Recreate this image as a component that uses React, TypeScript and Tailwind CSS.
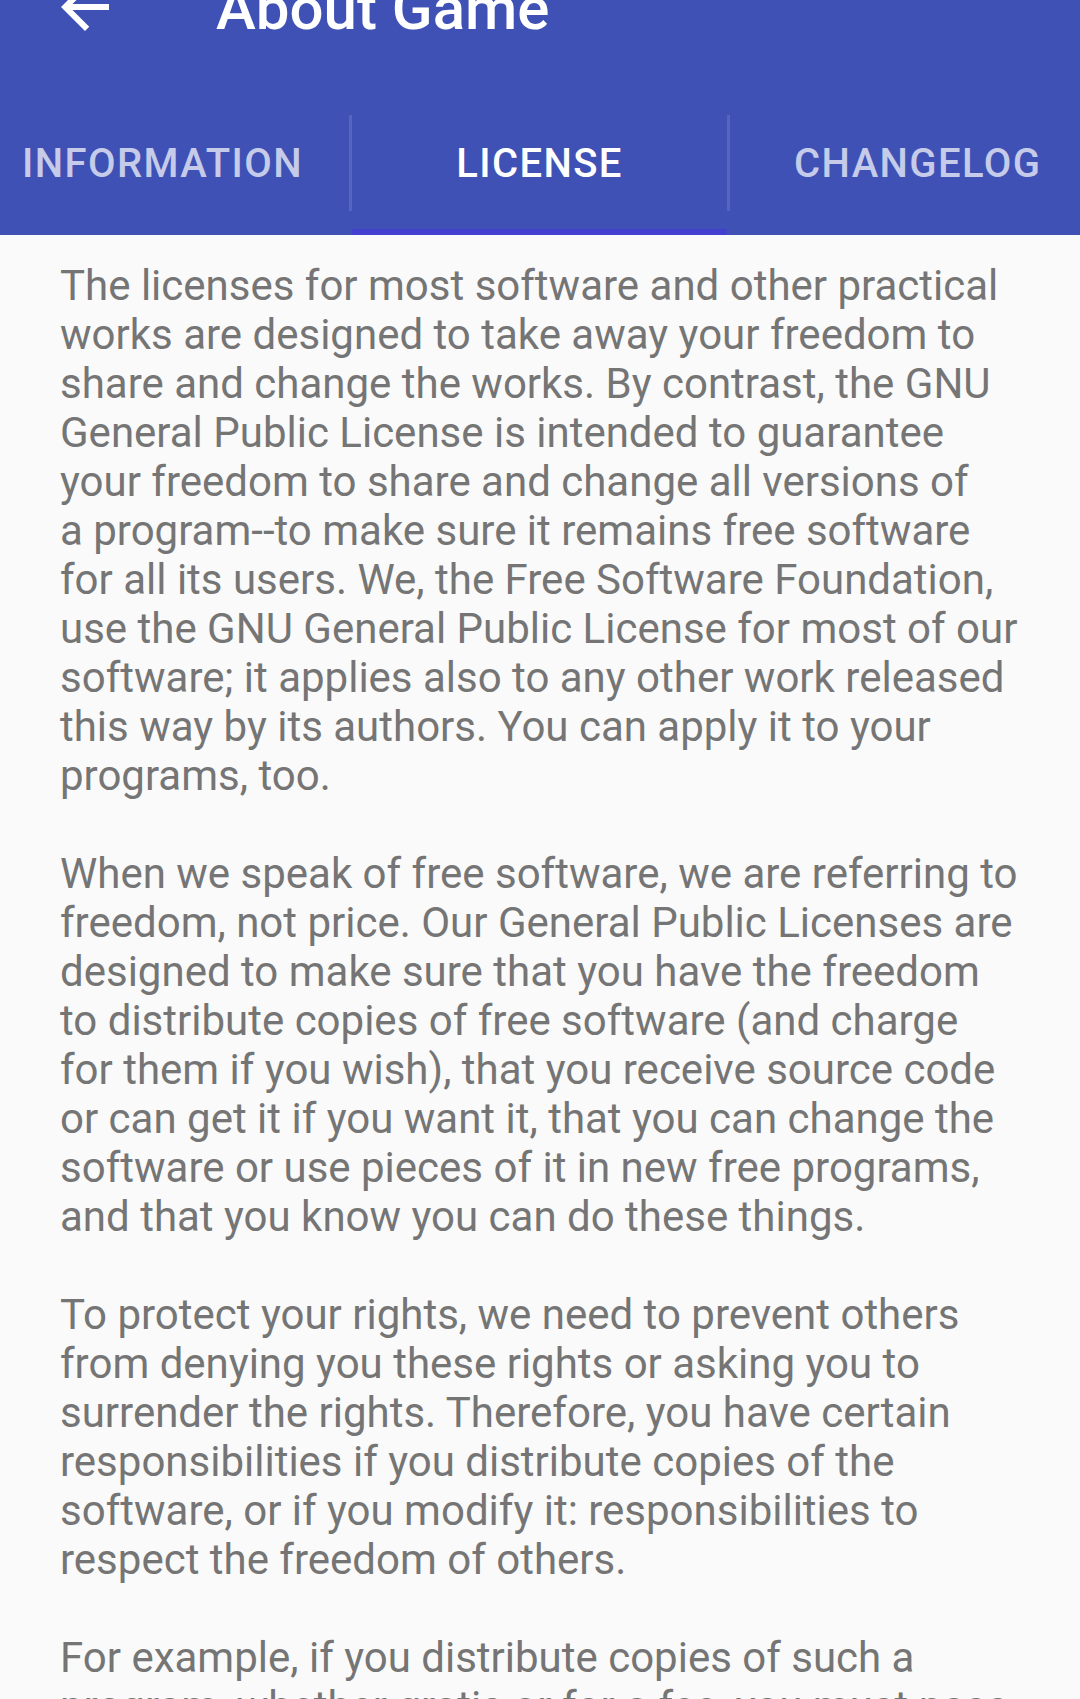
import React from "react";

const paragraphs: string[][] = [
  [
    "The licenses for most software and other practical",
    "works are designed to take away your freedom to",
    "share and change the works. By contrast, the GNU",
    "General Public License is intended to guarantee",
    "your freedom to share and change all versions of",
    "a program--to make sure it remains free software",
    "for all its users. We, the Free Software Foundation,",
    "use the GNU General Public License for most of our",
    "software; it applies also to any other work released",
    "this way by its authors. You can apply it to your",
    "programs, too.",
  ],
  [
    "When we speak of free software, we are referring to",
    "freedom, not price. Our General Public Licenses are",
    "designed to make sure that you have the freedom",
    "to distribute copies of free software (and charge",
    "for them if you wish), that you receive source code",
    "or can get it if you want it, that you can change the",
    "software or use pieces of it in new free programs,",
    "and that you know you can do these things.",
  ],
  [
    "To protect your rights, we need to prevent others",
    "from denying you these rights or asking you to",
    "surrender the rights. Therefore, you have certain",
    "responsibilities if you distribute copies of the",
    "software, or if you modify it: responsibilities to",
    "respect the freedom of others.",
  ],
  [
    "For example, if you distribute copies of such a",
    "program, whether gratis or for a fee, you must pass",
    "on to the recipients the same freedoms that you",
    "received. You must make sure that they, too,",
  ],
];

export default function App() {
  return (
    <div
      className="w-[1080px] h-[1699px] overflow-hidden bg-[#fafafa]"
      style={{ fontFamily: "Roboto, 'Noto Sans', sans-serif" }}
    >
      <div className="flex flex-col bg-[#3f51b5]">
        <div className="h-[103px] flex flex-col">
          <div className="flex flex-row h-[72px] -mt-[29px] items-start">
            <svg
              className="ml-[49px] shrink-0"
              width="72"
              height="72"
              viewBox="0 0 24 24"
              fill="#ffffff"
            >
              <path d="M20 11H7.83l5.59-5.59L12 4l-8 8 8 8 1.41-1.41L7.83 13H20v-2z" />
            </svg>
            <div className="ml-[95px] mt-[8px] text-[60px] leading-[60px] font-medium text-white whitespace-nowrap">
              About Game
            </div>
          </div>
        </div>
        <div className="h-[132px] flex flex-row">
          <div className="w-[349px] pl-[22px] pt-[41px] text-[40px] leading-[40px] font-medium tracking-[1.4px] text-[#c5cbe9] whitespace-nowrap">
            INFORMATION
          </div>
          <div className="w-[3px] h-[96px] mt-[12px] bg-[#5666be]" />
          <div className="w-[375px] flex flex-col">
            <div className="flex-1 pt-[41px] text-center text-[40px] leading-[40px] font-medium tracking-[1.4px] text-white whitespace-nowrap">
              LICENSE
            </div>
            <div className="h-[6px] bg-[#4340cf]" />
          </div>
          <div className="w-[3px] h-[96px] mt-[12px] bg-[#5666be]" />
          <div className="flex-1 pl-[64px] pt-[41px] text-[40px] leading-[40px] font-medium tracking-[1.4px] text-[#c5cbe9] whitespace-nowrap">
            CHANGELOG
          </div>
        </div>
      </div>
      <div className="px-[60px] pt-[26px] flex flex-col gap-[49px] text-[42px] leading-[49px] text-[#757575]">
        {paragraphs.map((lines, i) => (
          <p key={i}>
            {lines.map((l, j) => (
              <span key={j} className="block whitespace-nowrap">
                {l}
              </span>
            ))}
          </p>
        ))}
      </div>
    </div>
  );
}
